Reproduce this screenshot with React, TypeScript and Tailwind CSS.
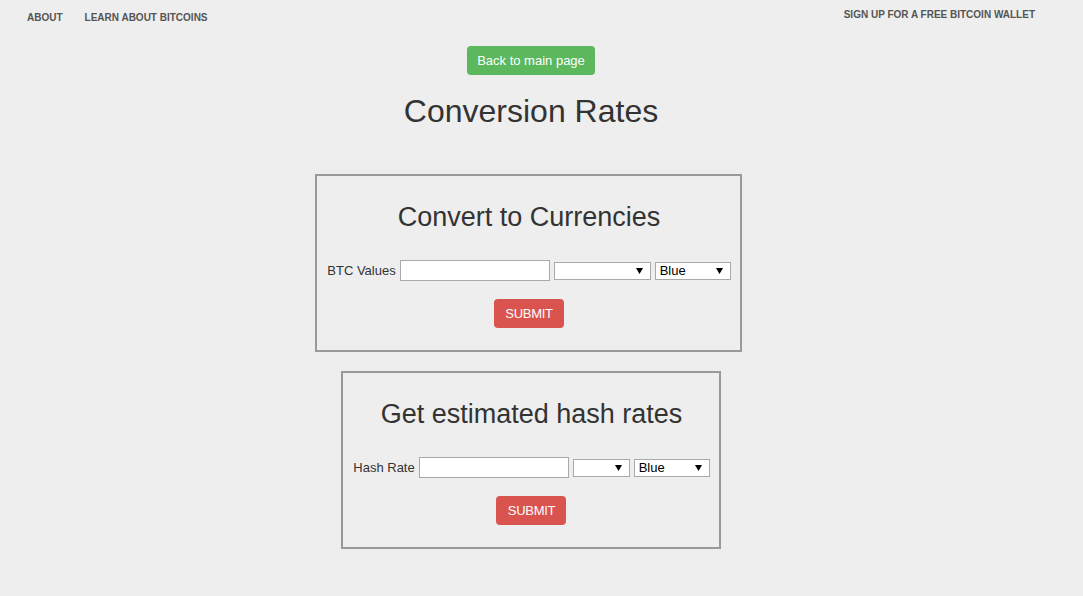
import React from "react";

function Arrow() {
  return (
    <svg width="7" height="6" viewBox="0 0 7 6" className="shrink-0">
      <path d="M0 0 H7 L3.5 6 Z" fill="#000" />
    </svg>
  );
}

function FakeSelect({ width, value }: { width: string; value?: string }) {
  return (
    <div
      className={`${width} h-[18px] bg-white border border-[#a9a9a9] flex items-center justify-between pl-[4px] pr-[7px] text-[13px] leading-[16px] text-black`}
    >
      <span>{value ?? ""}</span>
      <Arrow />
    </div>
  );
}

function Box({
  title,
  label,
  selectWidth,
}: {
  title: string;
  label: string;
  selectWidth: string;
}) {
  return (
    <div className="border-2 border-[#999999] flex flex-col items-center pt-[26px] pb-[22px] pl-[10px] pr-[9px]">
      <h2 className="text-[27px] leading-[31px] text-[#333333] font-normal">{title}</h2>
      <div className="mt-[27px] h-[21px] flex items-center gap-[4px]">
        <span className="text-[13px] leading-[15px] text-[#333333]">{label}</span>
        <div className="w-[150px] h-[21px] bg-white border border-[#a9a9a9]" />
        <FakeSelect width={selectWidth} />
        <FakeSelect width="w-[76px]" value="Blue" />
      </div>
      <button className="mt-[18px] w-[70px] h-[29px] rounded-[4px] bg-[#d9534f] text-white text-[13px] leading-[15px] tracking-[-0.3px]">
        SUBMIT
      </button>
    </div>
  );
}

export default function App() {
  return (
    <div
      className="min-h-[596px] bg-[#eeeeee]"
      style={{ fontFamily: '"Liberation Sans", Arial, sans-serif' }}
    >
      <div className="w-[1083px] h-[46px] flex items-start justify-between">
        <div className="flex gap-[22px] pl-[27px] pt-[12px] text-[10px] leading-[12px] font-bold text-[#555555] uppercase">
          <span>About</span>
          <span>Learn about Bitcoins</span>
        </div>
        <div className="pr-[48px] pt-[9px] text-[10px] leading-[12px] font-bold text-[#555555] uppercase">
          <span>Sign up for a free Bitcoin wallet</span>
        </div>
      </div>
      <div className="w-[1062px] flex flex-col items-center">
        <button className="w-[128px] h-[29px] rounded-[4px] bg-[#5cb85c] text-white text-[13px] leading-[15px]">
          Back to main page
        </button>
        <h1 className="mt-[18px] text-[32px] leading-[36px] text-[#333333] font-normal">
          Conversion Rates
        </h1>
        <div className="mt-[45px] mr-[5px]">
          <Box title="Convert to Currencies" label="BTC Values" selectWidth="w-[97px]" />
        </div>
        <div className="mt-[19px]">
          <Box title="Get estimated hash rates" label="Hash Rate" selectWidth="w-[57px]" />
        </div>
      </div>
    </div>
  );
}
